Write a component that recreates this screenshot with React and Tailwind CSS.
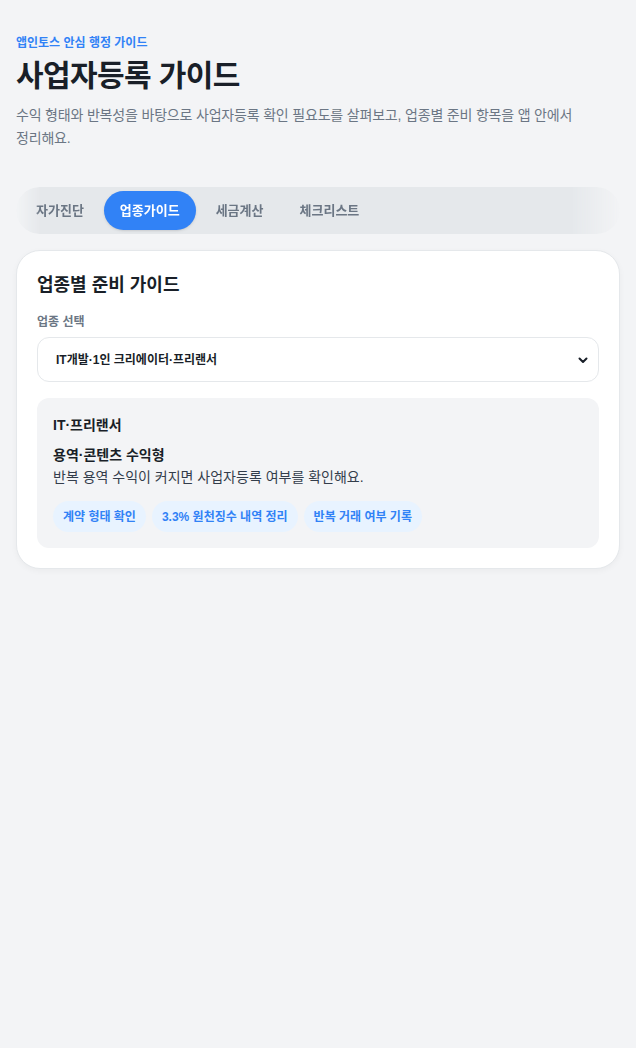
import React, { useState } from 'react';

const tabs = ['자가진단', '업종가이드', '세금계산', '체크리스트'];

const chips = ['계약 형태 확인', '3.3% 원천징수 내역 정리', '반복 거래 여부 기록'];

export default function App() {
  const [active, setActive] = useState(1);

  return (
    <div className="min-h-screen bg-[#f3f4f6] px-4 pt-[34px] pb-10 font-['Liberation_Sans','Noto_Sans_CJK_KR',sans-serif] text-[#191f28]">
      {/* Header */}
      <header>
        <p className="text-[12px] font-bold leading-[18px] text-[#3182f6]">앱인토스 안심 행정 가이드</p>
        <h1 className="mt-[4px] text-[30px] font-bold leading-[40px] tracking-[-0.6px]">사업자등록 가이드</h1>
        <p className="mt-[8px] max-w-[580px] break-keep text-[14px] leading-[23px] tracking-[-0.18px] text-[#6b7684]">
          수익 형태와 반복성을 바탕으로 사업자등록 확인 필요도를 살펴보고, 업종별 준비 항목을 앱 안에서 정리해요.
        </p>
      </header>

      {/* Tabs */}
      <nav className="mt-[37px] flex gap-1 rounded-full bg-[#e5e8eb] p-1 [mask-image:linear-gradient(to_right,transparent,black_24px,black_calc(100%-48px),transparent)]">
        {tabs.map((t, i) => (
          <button
            key={t}
            onClick={() => setActive(i)}
            className={
              i === active
                ? 'h-[39px] rounded-full bg-[#3182f6] px-4 text-[13px] font-bold text-white shadow-sm'
                : 'h-[39px] rounded-full px-4 text-[13px] font-bold text-[#6b7684]'
            }
          >
            {t}
          </button>
        ))}
      </nav>

      {/* Card */}
      <section className="mt-4 rounded-[24px] border border-[#e5e8eb] bg-white px-5 pt-[20px] pb-5 shadow-[0_2px_6px_rgba(0,0,0,0.04)]">
        <h2 className="text-[18px] font-bold leading-[28px]">업종별 준비 가이드</h2>

        <label className="mt-[14px] block text-[12px] font-semibold leading-[18px] text-[#6b7684]">업종 선택</label>
        <div className="relative mt-[6px]">
          <select className="h-[45px] w-full appearance-none rounded-xl border border-[#e5e8eb] bg-white pl-[18px] pr-10 text-[12px] font-bold text-[#191f28] outline-none">
            <option>IT개발·1인 크리에이터·프리랜서</option>
          </select>
          <svg
            className="pointer-events-none absolute right-[10px] top-1/2 h-[12px] w-[12px] -translate-y-1/2 text-[#191f28]"
            viewBox="0 0 12 12"
            fill="none"
            stroke="currentColor"
            strokeWidth="2"
            strokeLinecap="round"
            strokeLinejoin="round"
          >
            <path d="M2.5 4.5 6 8l3.5-3.5" />
          </svg>
        </div>

        <div className="mt-4 rounded-xl bg-[#f3f4f6] px-4 pt-[16px] pb-[16px]">
          <h3 className="text-[14px] font-bold leading-[22px]">IT·프리랜서</h3>
          <p className="mt-[8px] text-[14px] font-bold leading-[22px]">용역·콘텐츠 수익형</p>
          <p className="text-[14px] leading-[22px] text-[#333d4b]">반복 용역 수익이 커지면 사업자등록 여부를 확인해요.</p>
          <div className="mt-[13px] flex flex-wrap gap-[6px]">
            {chips.map(c => (
              <span key={c} className="flex h-[31px] items-center rounded-full bg-[#e8f3ff] px-[10px] text-[12px] font-bold text-[#3182f6]">
                {c}
              </span>
            ))}
          </div>
        </div>
      </section>
    </div>
  );
}
